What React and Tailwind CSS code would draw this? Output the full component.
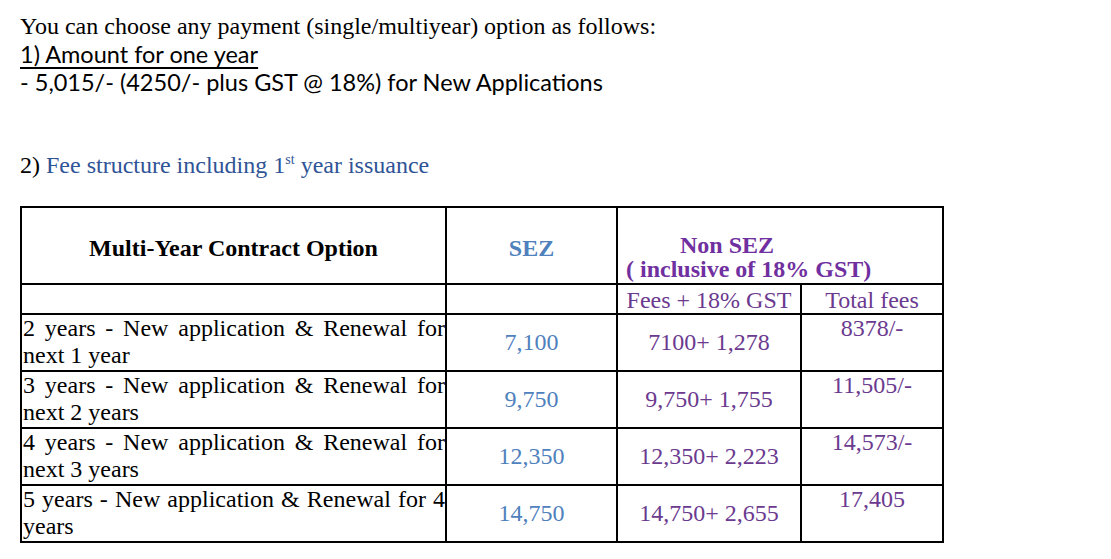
export default function App() {
  const serif = { fontFamily: '"Liberation Serif", "Times New Roman", serif' };
  const rows = [
    ["2 years - New application & Renewal for next 1 year", "7,100", "7100+ 1,278", "8378/-"],
    ["3 years - New application & Renewal for next 2 years", "9,750", "9,750+ 1,755", "11,505/-"],
    ["4 years - New application & Renewal for next 3 years", "12,350", "12,350+ 2,223", "14,573/-"],
    ["5 years - New application & Renewal for 4 years", "14,750", "14,750+ 2,655", "17,405"],
  ];
  return (
    <div className="w-[1111px] h-[559px] bg-white overflow-hidden text-black">
      <div className="pl-[20px] pt-[12px]">
        <p className="font-['Liberation_Serif',serif] text-[24px] leading-[28px]">
          You can choose any payment (single/multiyear) option as follows:
        </p>
        <p className="font-['Lato',sans-serif] text-[23.5px] leading-[28px] underline underline-offset-[4px] decoration-[1.5px]">
          1) Amount for one year
        </p>
        <p className="font-['Lato',sans-serif] text-[23.5px] leading-[28px]">
          - 5,015/- (4250/- plus GST @ 18%) for New Applications
        </p>
        <p className="mt-[55px] font-['Liberation_Serif',serif] text-[24px] leading-[28px]">
          2){" "}
          <span className="text-[#2f5496]">
            Fee structure including 1<span className="text-[14px] align-[9px] leading-none">st</span> year issuance
          </span>
        </p>
      </div>
      <div className="pl-[20px] mt-[27px]">
        <table className="table-fixed border-collapse w-[924px] text-[24px]" style={serif}>
          <colgroup>
            <col className="w-[425px]" />
            <col className="w-[171px]" />
            <col className="w-[184px]" />
            <col className="w-[142px]" />
          </colgroup>
          <tbody>
            <tr className="h-[77px]">
              <td className="border-2 border-black text-center font-bold align-middle pt-[4px]">
                Multi-Year Contract Option
              </td>
              <td className="border-2 border-black text-center font-bold text-[#4f81bd] align-middle pt-[4px]">SEZ</td>
              <td colSpan={2} className="border-2 border-black font-bold text-[#7030a0] align-top pt-[25px] leading-[24px]">
                <div className="pl-[62px]">Non SEZ</div>
                <div className="pl-[8px] whitespace-nowrap">( inclusive of 18% GST)</div>
              </td>
            </tr>
            <tr className="h-[30px] text-[#6b3a8f] leading-[26px]">
              <td className="border-2 border-black"></td>
              <td className="border-2 border-black"></td>
              <td className="border-2 border-black text-center pt-[2px]">Fees + 18% GST</td>
              <td className="border-2 border-black text-center pt-[2px]">Total fees</td>
            </tr>
            {rows.map((r, i) => (
              <tr key={i} className="h-[57px]">
                <td className="border-2 border-black align-top pl-[1px] pt-0 leading-[27px] text-justify [text-align-last:left]">
                  {r[0]}
                </td>
                <td className="border-2 border-black text-center align-middle text-[#4f81bd] leading-[27px]">{r[1]}</td>
                <td className="border-2 border-black text-center align-middle text-[#6b3a8f] leading-[27px]">{r[2]}</td>
                <td className="border-2 border-black text-center align-top text-[#6b3a8f] pt-0 leading-[27px]">{r[3]}</td>
              </tr>
            ))}
          </tbody>
        </table>
      </div>
    </div>
  );
}
